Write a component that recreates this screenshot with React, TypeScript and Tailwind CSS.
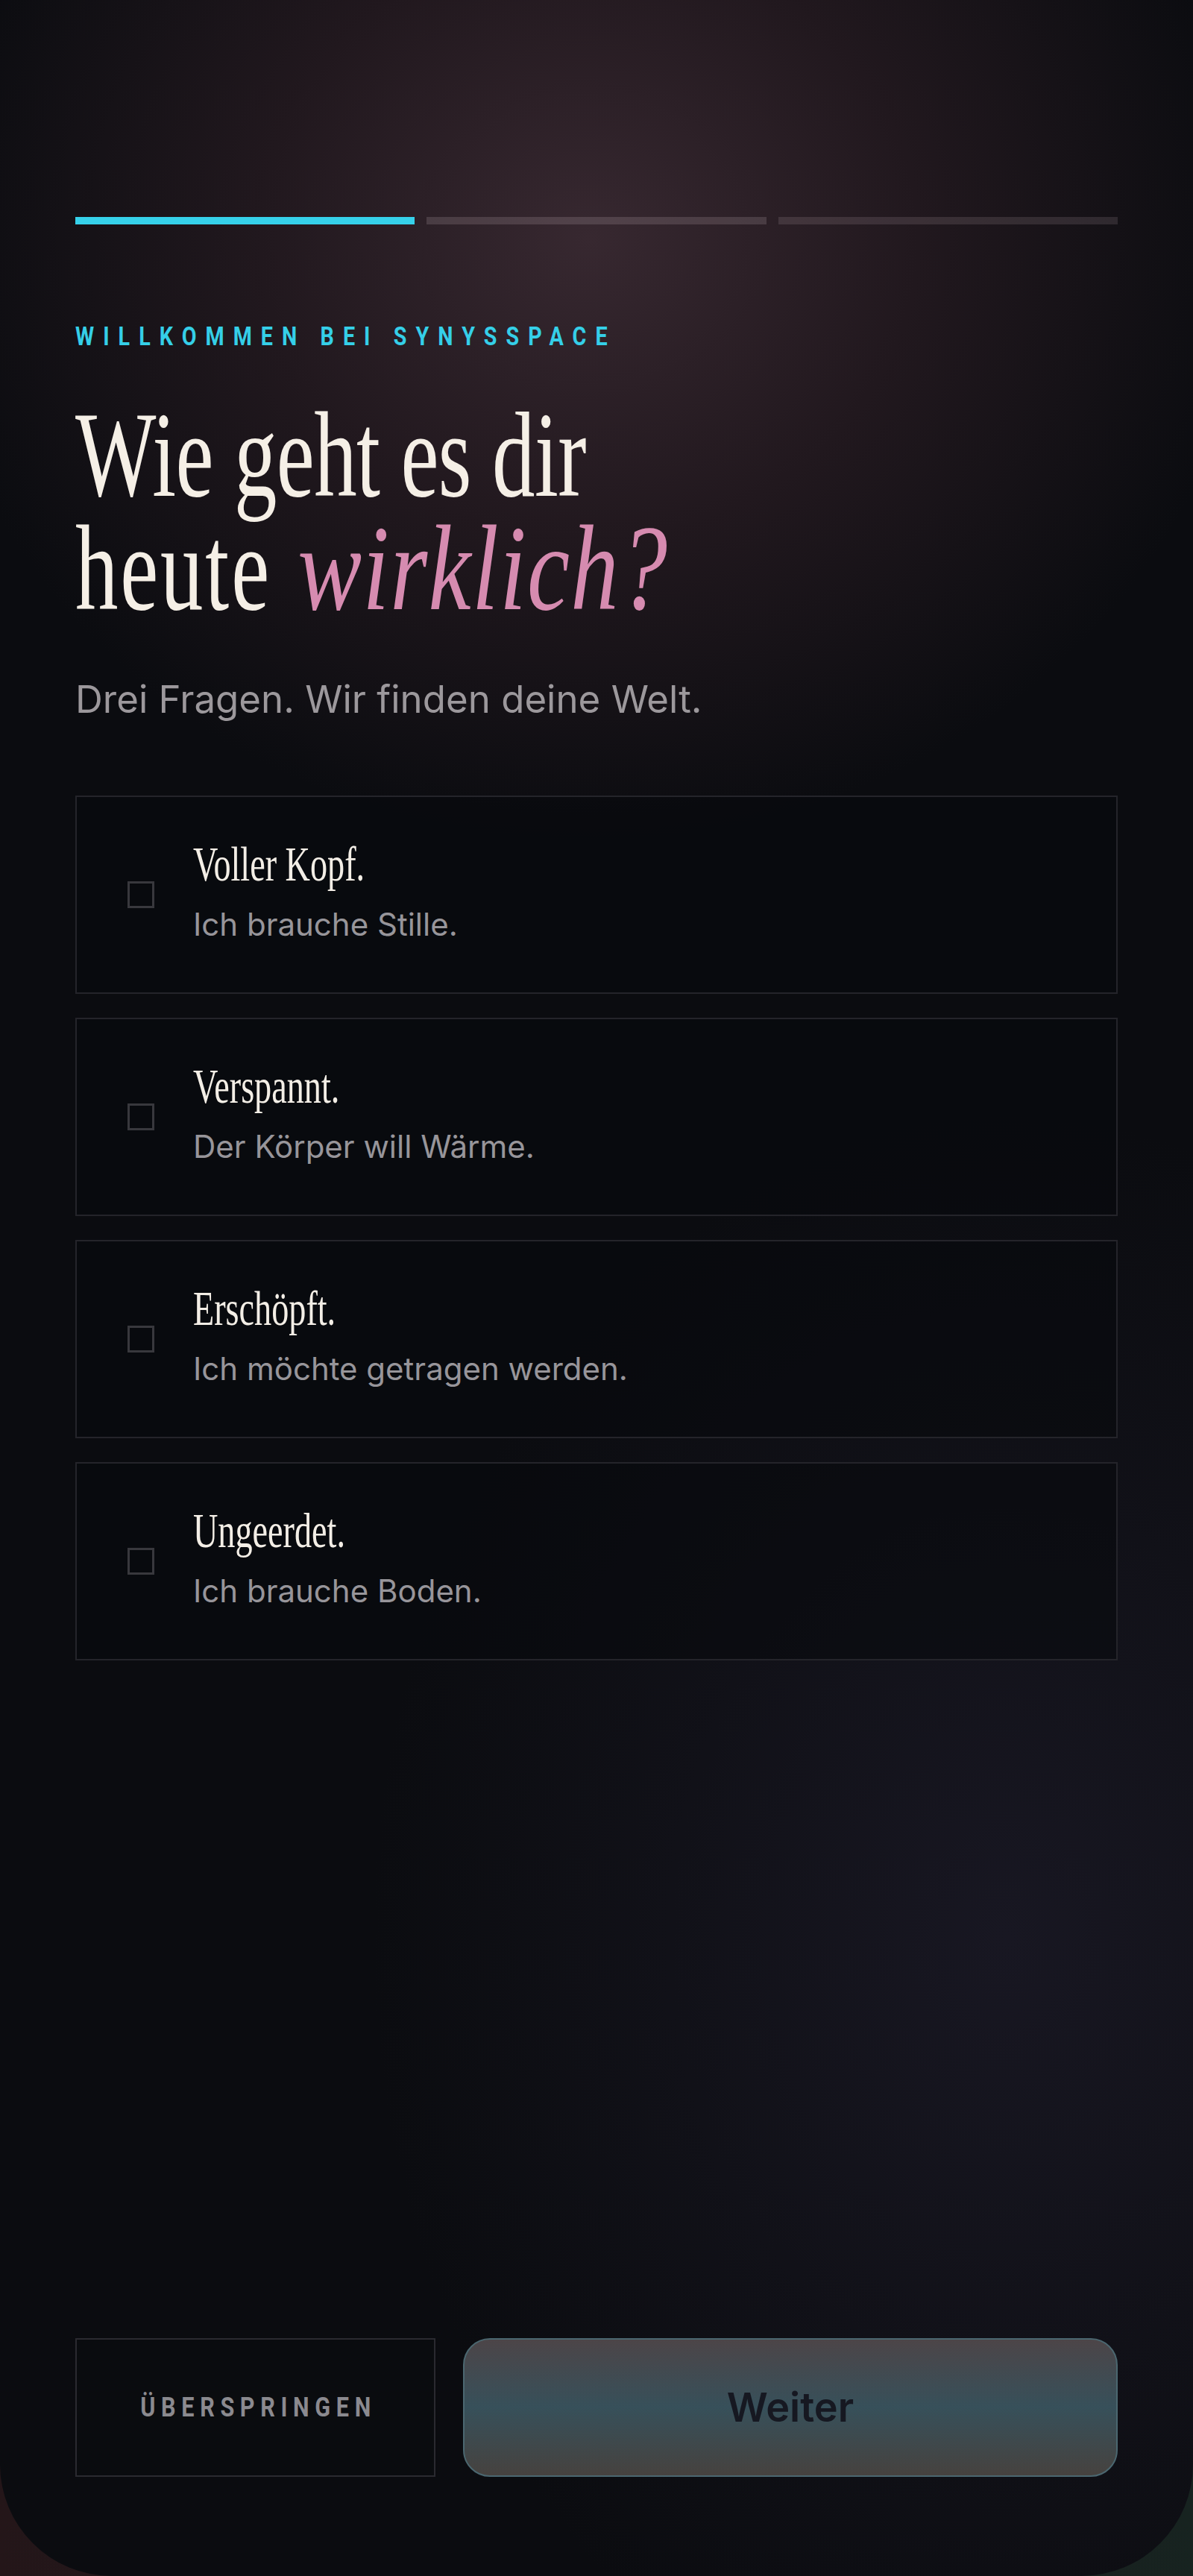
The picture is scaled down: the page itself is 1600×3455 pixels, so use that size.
import React from 'react';

const options = [
  { title: 'Voller Kopf.', text: 'Ich brauche Stille.' },
  { title: 'Verspannt.', text: 'Der Körper will Wärme.' },
  { title: 'Erschöpft.', text: 'Ich möchte getragen werden.' },
  { title: 'Ungeerdet.', text: 'Ich brauche Boden.' },
];

function Progress() {
  return (
    <div className="flex gap-[16px]">
      <div className="h-[10px] flex-1 bg-[#36d1ea]" />
      <div className="h-[10px] flex-1 bg-[#f3dbe4]/15" />
      <div className="h-[10px] flex-1 bg-[#f3dbe4]/12" />
    </div>
  );
}

function OptionCard({ title, text }: { title: string; text: string }) {
  return (
    <button
      type="button"
      className="flex h-[266px] w-full items-center border-2 border-[#24242a] bg-[#08090c]/55 pl-[68px] text-left"
    >
      <span className="h-[36px] w-[36px] flex-none border-[3px] border-[#38383d]" />
      <span className="mb-[16px] ml-[52px] flex flex-col">
        <span className="block origin-left scale-x-[0.7] whitespace-nowrap font-['Liberation_Serif',serif] text-[66px] leading-[76px] text-[#f3eee6]">
          {title}
        </span>
        <span className="mt-[19px] block font-['Inter',sans-serif] text-[42px] leading-[48px] text-[#97959a]">
          {text}
        </span>
      </span>
    </button>
  );
}

export default function App() {
  return (
    <div className="min-h-[3455px] w-full bg-[linear-gradient(90deg,#241619,#1c191d_50%,#172320)]">
      <div className="flex h-[3455px] w-full flex-col overflow-hidden rounded-b-[150px] bg-[#0b0c10] bg-[radial-gradient(ellipse_1050px_950px_at_790px_320px,#372830_0%,#21181e_42%,transparent_85%),radial-gradient(ellipse_1000px_1300px_at_1350px_2600px,#181722_0%,#111118_45%,transparent_85%)] px-[101px] pb-[133px] pt-[291px]">
        <Progress />

        <p className="mt-[131px] origin-left scale-x-[0.82] whitespace-nowrap font-['Roboto',sans-serif] text-[35px] font-bold leading-[40px] tracking-[0.42em] text-[#35cfe8]">
          WILLKOMMEN BEI SYNYSSPACE
        </p>

        <h1 className="mt-[62px] origin-left scale-x-[0.7] whitespace-nowrap font-['Liberation_Serif',serif] text-[164px] font-normal leading-[152px] tracking-[-0.005em] text-[#f5efe6]">
          <span className="block">Wie geht es dir</span>
          <span className="block">
            <span className="tracking-[0.025em]">heute</span>{' '}
            <em className="ml-[10px] inline-block origin-left scale-x-[1.12] tracking-[0.01em] text-[#d68bb0]">
              wirklich?
            </em>
          </span>
        </h1>

        <p className="mt-[70px] font-['Inter',sans-serif] text-[51px] leading-[60px] text-[#9c989c]">
          Drei Fragen. Wir finden deine Welt.
        </p>

        <div className="mt-[99px] flex flex-col gap-[32px]">
          {options.map((o) => (
            <OptionCard key={o.title} title={o.title} text={o.text} />
          ))}
        </div>

        <div className="flex-1" />

        <div className="flex h-[186px] gap-[37px]">
          <button
            type="button"
            className="flex w-[483px] flex-none items-center justify-center border-2 border-[#2a2a30] bg-[#0b0c10]/40"
          >
            <span className="block scale-x-[0.85] whitespace-nowrap pl-[0.25em] font-['Roboto',sans-serif] text-[36px] font-bold leading-[40px] tracking-[0.25em] text-[#8b8a8f]">
              ÜBERSPRINGEN
            </span>
          </button>
          <button
            type="button"
            className="flex flex-1 items-center justify-center rounded-[36px] border-2 border-[#4b6770] bg-[linear-gradient(180deg,#4c4548_0%,#37505a_50%,#46423f_100%)]"
          >
            <span className="font-['Inter',sans-serif] text-[54px] font-semibold leading-[64px] text-[#161821]">
              Weiter
            </span>
          </button>
        </div>
      </div>
    </div>
  );
}
